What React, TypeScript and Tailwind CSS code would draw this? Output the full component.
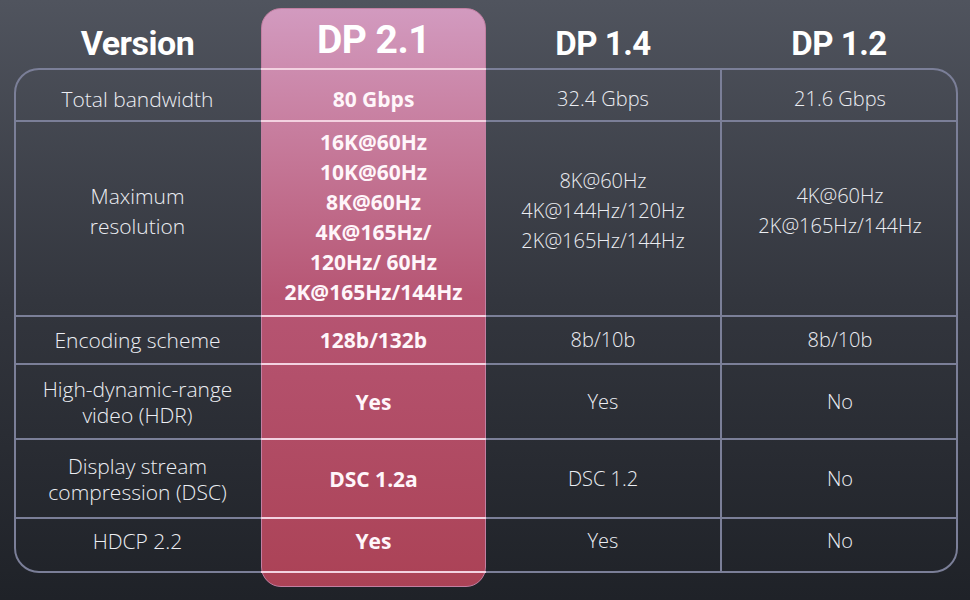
const rows = [
  {
    row: 'row-start-2',
    pad: 'pt-[10px]',
    pinkPad: 'border-t-2 pt-[8px]',
    leading: 'leading-[26px]',
    label: ['Total bandwidth'],
    dp21: ['80 Gbps'],
    dp14: ['32.4 Gbps'],
    dp12: ['21.6 Gbps'],
  },
  {
    row: 'row-start-3',
    pad: 'pb-[16px]',
    pinkPad: 'pb-[4px]',
    leading: 'leading-[30px]',
    label: ['Maximum', 'resolution'],
    dp21: ['16K@60Hz', '10K@60Hz', '8K@60Hz', '4K@165Hz/', '120Hz/ 60Hz', '2K@165Hz/144Hz'],
    dp14: ['8K@60Hz', '4K@144Hz/120Hz', '2K@165Hz/144Hz'],
    dp12: ['4K@60Hz', '2K@165Hz/144Hz'],
  },
  {
    row: 'row-start-4',
    pad: '',
    pinkPad: '',
    leading: 'leading-[26px]',
    label: ['Encoding scheme'],
    dp21: ['128b/132b'],
    dp14: ['8b/10b'],
    dp12: ['8b/10b'],
  },
  {
    row: 'row-start-5',
    pad: '',
    pinkPad: '',
    leading: 'leading-[26px]',
    label: ['High-dynamic-range', 'video (HDR)'],
    dp21: ['Yes'],
    dp14: ['Yes'],
    dp12: ['No'],
  },
  {
    row: 'row-start-6',
    pad: '',
    pinkPad: '',
    leading: 'leading-[26px]',
    label: ['Display stream', 'compression (DSC)'],
    dp21: ['DSC 1.2a'],
    dp14: ['DSC 1.2'],
    dp12: ['No'],
  },
  {
    row: 'row-start-7',
    pad: 'pb-[10px]',
    pinkPad: 'pb-[8px]',
    leading: 'leading-[26px]',
    label: ['HDCP 2.2'],
    dp21: ['Yes'],
    dp14: ['Yes'],
    dp12: ['No'],
  },
]

function Lines({ items }: { items: string[] }) {
  return (
    <>
      {items.map((t) => (
        <span key={t} className="block whitespace-nowrap">
          {t}
        </span>
      ))}
    </>
  )
}

export default function App() {
  const head = "flex items-end justify-center pb-[8px] row-start-1 font-['Roboto',sans-serif] font-bold text-white tracking-[-0.5px] leading-none"
  const cell = "flex flex-col items-center justify-center text-center font-['Open_Sans','Liberation_Sans',sans-serif]"

  return (
    <div className="w-[970px] h-[600px] overflow-hidden bg-gradient-to-b from-[#50545e] via-[#33363e] to-[#1f2228] pl-[14px]">
      <div className="grid grid-cols-[247px_225px_234px_238px] grid-rows-[68px_54px_195px_48px_75px_79px_54px]">
        {/* table frame */}
        <div className="col-start-1 col-span-4 row-start-2 row-span-6 border-2 border-[#7b7f98] rounded-[25px]" />

        {/* highlighted DP 2.1 column */}
        <div className="col-start-2 row-start-1 row-span-7 mt-[8px] -mb-[14px] rounded-[20px] border border-[#c27fa2] bg-gradient-to-b from-[#d29abf] via-[#b65573] via-50% to-[#ab4256]" />

        {/* header */}
        <div className={`${head} col-start-1 text-[34px]`}>Version</div>
        <div className={`${head} col-start-2 text-[39px]`}>DP 2.1</div>
        <div className={`${head} col-start-3 text-[33px]`}>DP 1.4</div>
        <div className={`${head} col-start-4 text-[33px]`}>DP 1.2</div>

        {rows.map((r, i) => {
          const last = i === rows.length - 1
          const line = last ? '' : 'border-b-2 border-[#7b7f98]'
          return (
            <div key={r.label.join(' ')} className="contents">
              <div className={`${cell} ${r.row} ${r.leading} ${r.pad} ${line} col-start-1 font-light text-[21px] text-[#eceef3]`}>
                <Lines items={r.label} />
              </div>
              <div className={`${cell} ${r.row} ${r.leading} ${r.pinkPad} col-start-2 border-b-2 border-[#f3d2e1] font-bold text-[21px] text-[#fff6fa]`}>
                <Lines items={r.dp21} />
              </div>
              <div className={`${cell} ${r.row} ${r.leading} ${r.pad} ${line} col-start-3 font-light text-[20px] text-[#eceef3]`}>
                <Lines items={r.dp14} />
              </div>
              <div className={`${cell} ${r.row} ${r.leading} ${r.pad} ${line} col-start-4 border-l-2 border-l-[#7b7f98] font-light text-[20px] text-[#eceef3]`}>
                <Lines items={r.dp12} />
              </div>
            </div>
          )
        })}
      </div>
    </div>
  )
}
